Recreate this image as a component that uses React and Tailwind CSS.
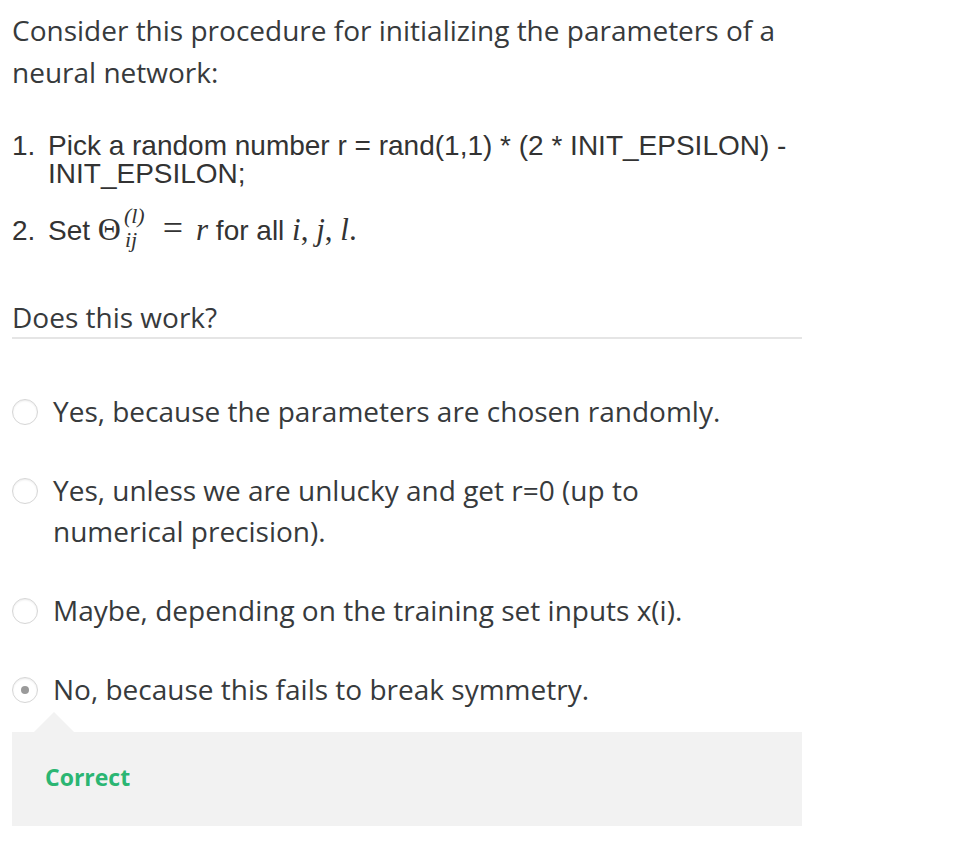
import React from "react";

function Radio({ checked }) {
  return (
    <span className="mt-[8px] flex h-[26px] w-[26px] shrink-0 items-center justify-center rounded-full border border-[#d6d6d6] bg-white shadow-[inset_0_1px_2px_rgba(0,0,0,0.08)]">
      {checked && <span className="h-[8px] w-[8px] rounded-full bg-[#9a9a9a]" />}
    </span>
  );
}

function Option({ children, checked }) {
  return (
    <div className="flex items-start gap-[15px]">
      <Radio checked={checked} />
      <div className="text-[28px] leading-[41px] text-[#373a3c]">{children}</div>
    </div>
  );
}

const serif = '"Liberation Serif", "Times New Roman", serif';

export default function App() {
  return (
    <div className="bg-white pl-[12px] pt-[9px]" style={{ fontFamily: '"Open Sans", sans-serif' }}>
      <div className="w-[790px]">
        <p className="text-[28px] leading-[42px] text-[#373a3c]">
          Consider this procedure for initializing the parameters of a neural network:
        </p>
        <ol className="mt-[39px] text-[28px] leading-[28px] text-[#333]" style={{ fontFamily: '"Liberation Sans", Arial, sans-serif' }}>
          <li className="flex">
            <span className="w-[36px] shrink-0">1.</span>
            <span>Pick a random number r = rand(1,1) * (2 * INIT_EPSILON) - INIT_EPSILON;</span>
          </li>
          <li className="mt-[16px] flex items-baseline">
            <span className="w-[36px] shrink-0">2.</span>
            <span>
              Set{" "}
              <span className="text-[32px] leading-none" style={{ fontFamily: serif }}>Θ</span>
              <span className="ml-[3px] inline-flex flex-col align-[17px] text-[22px] italic leading-[24px]" style={{ fontFamily: serif }}>
                <span>(l)</span>
                <span className="ml-[1px]">ij</span>
              </span>
              <span className="ml-[18px] mr-[13px] text-[36px] leading-none" style={{ fontFamily: serif }}>=</span>
              <span className="text-[31px] italic leading-none" style={{ fontFamily: serif }}>r</span>
              {" "}for all{" "}
              <span className="text-[31px] italic leading-none" style={{ fontFamily: serif }}>
                i<span className="not-italic">,</span> j<span className="not-italic">,</span> l<span className="not-italic">.</span>
              </span>
            </span>
          </li>
        </ol>
        <div className="mt-[47px] border-b-2 border-[#e5e5e5] pb-[2px] text-[28px] leading-[36px] text-[#373a3c]">
          Does this work?
        </div>
        <div className="mt-[52px] flex flex-col gap-[38px]">
          <Option>Yes, because the parameters are chosen randomly.</Option>
          <Option>
            Yes, unless we are unlucky and get r=0 (up to
            <br />
            numerical precision).
          </Option>
          <Option>Maybe, depending on the training set inputs x(i).</Option>
          <Option checked>No, because this fails to break symmetry.</Option>
        </div>
        <div className="relative mt-[22px] h-[94px] bg-[#f2f2f2] pl-[33px] pt-[28px]">
          <span className="absolute left-[22px] top-[-20px] h-0 w-0 border-x-[20px] border-b-[20px] border-x-transparent border-b-[#f2f2f2]" />
          <span className="text-[23px] font-bold text-[#2bb673]">Correct</span>
        </div>
      </div>
    </div>
  );
}
